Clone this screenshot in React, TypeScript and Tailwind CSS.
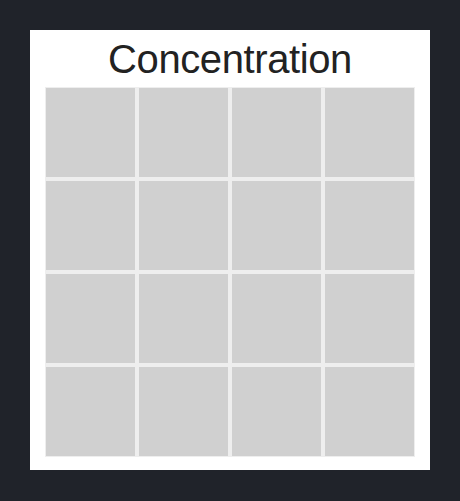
export default function App() {
  const cells = Array.from({ length: 16 }, (_, i) => i);

  return (
    <div className="min-h-screen w-full bg-[#20232a] p-[30px] font-['Liberation_Sans',Arial,sans-serif]">
      <div className="w-[400px] h-[440px] bg-white flex flex-col items-center">
        <h1 className="mt-[5px] text-[40px] leading-[48px] text-[#222222] tracking-[-0.4px]">Concentration</h1>
        <div className="mt-[4px] grid grid-cols-4 gap-[4px] p-px bg-[#eeeeee] w-[370px] h-[370px]">
          {cells.map((c) => (
            <div key={c} className="bg-[#d0d0d0]" />
          ))}
        </div>
      </div>
    </div>
  );
}
